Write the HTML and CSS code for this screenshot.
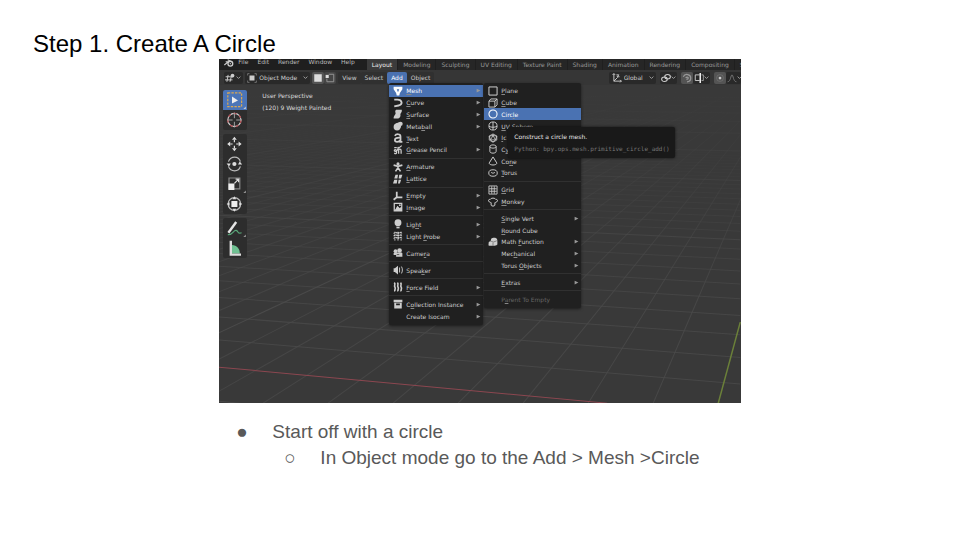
FILE: index.html
```html
<!DOCTYPE html>
<html lang="en">
<head>
<meta charset="utf-8">
<title>Step 1. Create A Circle</title>
<link rel="stylesheet" href="styles.css">
</head>
<body>
<svg class="symbols" aria-hidden="true">
  <symbol id="arrow" viewBox="0 0 8 8"><path d="M1 1l6 3-6 3z" fill="currentColor"/></symbol>
  <symbol id="chev" viewBox="0 0 8 8"><path d="M1 2.5l3 3 3-3" fill="none" stroke="currentColor" stroke-width="1.4"/></symbol>
  <symbol id="mesh" viewBox="0 0 16 16"><path fill-rule="evenodd" d="M1 1h14v4l-4 6-1 4H6l-1-4-4-6zM6 5l2 5 2-5z" fill="currentColor"/></symbol>
  <symbol id="curve" viewBox="0 0 16 16"><path d="M2 2.500h5c8 0 9 8 2 9.500l-7 1.500" fill="none" stroke="currentColor" stroke-width="3"/></symbol>
  <symbol id="surface" viewBox="0 0 16 16"><path d="M5 1h9c1 5-3 5-2 9 0 3-2 5-4 5H1c0-5 4-6 3-9-1-3 0-4 1-5z" fill="currentColor"/></symbol>
  <symbol id="meta" viewBox="0 0 16 16"><circle cx="6.500" cy="9.500" r="5.500" fill="currentColor"/><circle cx="12" cy="4.500" r="3.500" fill="currentColor"/><path d="M4 4l6-2 3 7-3 4z" fill="currentColor"/></symbol>
  <symbol id="font" viewBox="0 0 16 16"><path d="M3 4.500c2-3.500 9-3.500 9 1V14h3M12 7.500C6 7 3 8.500 3 11c0 4 7 4 9 0" fill="none" stroke="currentColor" stroke-width="2.800"/></symbol>
  <symbol id="grease" viewBox="0 0 16 16"><path d="M2 13c5 3 4-3 3-5-2-2-4 1-2 2 3 1 6-3 5-7M9 14V9c0-3 4-3 4 0v5M2 4h4M9 5l5-4" fill="none" stroke="currentColor" stroke-width="2"/></symbol>
  <symbol id="armature" viewBox="0 0 16 16"><circle cx="8" cy="3" r="2.500" fill="currentColor"/><path d="M1 5l7 2 7-2M8 6v4M8 9l-4 6M8 9l4 6" fill="none" stroke="currentColor" stroke-width="2.600"/></symbol>
  <symbol id="lattice" viewBox="0 0 16 16"><path d="M4 1h4L7 7H2zM10 1h5l-2 6H9zM2 9h5l-1 6H0zM9 9h4l-2 6H8z" fill="currentColor"/></symbol>
  <symbol id="empty" viewBox="0 0 16 16"><path d="M6 1v9M6 10h9M6 10l-5 4" fill="none" stroke="currentColor" stroke-width="2.800"/></symbol>
  <symbol id="image" viewBox="0 0 16 16"><path fill-rule="evenodd" d="M1 1h14v14H1zM3 3v10l4-6 3 3 3-2V3z" fill="currentColor"/><path d="M3 14l4-8 3 3 3 5z" fill="currentColor"/><circle cx="11" cy="5" r="1.500" fill="currentColor"/></symbol>
  <symbol id="light" viewBox="0 0 16 16"><circle cx="8" cy="6" r="5.500" fill="currentColor"/><path d="M5.500 11h5v4h-5z" fill="currentColor"/><path d="M5 12h6" stroke="#202020"/></symbol>
  <symbol id="probe" viewBox="0 0 16 16"><path d="M1 4l3-2 4 2 3-2 4 2M1 8l3-2 4 2 3-2 4 2M1 12l3-2 4 2 3-2 4 2M3 1v14M8 1v14M13 1v14" fill="none" stroke="currentColor" stroke-width="1.800" stroke-dasharray="3 1"/></symbol>
  <symbol id="camera" viewBox="0 0 16 16"><circle cx="4" cy="5" r="3" fill="currentColor"/><circle cx="10.500" cy="4" r="3.700" fill="currentColor"/><path d="M4 7h10v7H5V11H1V8zM12 9l3-1v6l-3-2z" fill="currentColor"/><path d="M6 10.500h4" stroke="#202020"/></symbol>
  <symbol id="speaker" viewBox="0 0 16 16"><path d="M1 5h2l5-4v14l-5-4H1z" fill="currentColor"/><path d="M10.500 4v8M13.500 2.500c2 3 2 8 0 11" fill="none" stroke="currentColor" stroke-width="1.500"/></symbol>
  <symbol id="force" viewBox="0 0 16 16"><path d="M2 1c3 3-1 4 1 7s-1 4 0 7M7 1c3 3-1 4 1 7s-1 4 0 7M12 1c3 3-1 4 1 7s-1 4 0 7" fill="none" stroke="currentColor" stroke-width="2.600"/></symbol>
  <symbol id="collection" viewBox="0 0 16 16"><path fill-rule="evenodd" d="M1 1h14v4H1zM2 6h12v9H2zM5 7v3h6V7z" fill="currentColor"/></symbol>
  <symbol id="plane" viewBox="0 0 16 16"><path d="M1.500 1.500h13v13h-13z" fill="none" stroke="currentColor" stroke-width="1.600"/></symbol>
  <symbol id="cube" viewBox="0 0 16 16"><path d="M1.500 5h9.500v9.500H1.500zM1.500 5l3-3.500h10V11L11 14.500M11 5l3.500-3.500" fill="none" stroke="currentColor" stroke-width="1.500"/></symbol>
  <symbol id="circle" viewBox="0 0 16 16"><circle cx="8" cy="8" r="6.500" fill="none" stroke="currentColor" stroke-width="1.700"/></symbol>
  <symbol id="uv" viewBox="0 0 16 16"><circle cx="8" cy="8" r="6.500" fill="none" stroke="currentColor" stroke-width="1.500"/><path d="M8 1.500v13M1.500 8.500c4 2 9 2 13 0" fill="none" stroke="currentColor" stroke-width="1.500"/></symbol>
  <symbol id="ico" viewBox="0 0 16 16"><path d="M8 1.500l6 3.300v6.500l-6 3.300-6-3.300V4.800zM8 4l4 7H4zM8 1.500V4M2 5l6-1 6 1M4 11l-2-6M12 11l2-6M4 11l4 3.500 4-3.500" fill="none" stroke="currentColor" stroke-width="1.300"/></symbol>
  <symbol id="cyl" viewBox="0 0 16 16"><path d="M3 4v8c0 3.500 10 3.500 10 0V4C13 .6 3 .6 3 4zm0 0c0 3.500 10 3.500 10 0" fill="none" stroke="currentColor" stroke-width="1.500"/></symbol>
  <symbol id="cone" viewBox="0 0 16 16"><path d="M8 1.500L2 11c-1 4.500 13 4.500 12 0z" fill="none" stroke="currentColor" stroke-width="1.600"/></symbol>
  <symbol id="torus" viewBox="0 0 16 16"><ellipse cx="8" cy="8" rx="6.800" ry="5.200" fill="none" stroke="currentColor" stroke-width="1.500"/><path d="M5 7c2 1.700 4 1.700 6 0" fill="none" stroke="currentColor" stroke-width="1.500"/></symbol>
  <symbol id="grid" viewBox="0 0 16 16"><path d="M1.500 1.500h13v13h-13zM6 2v12M10 2v12M2 6h12M2 10h12" fill="none" stroke="currentColor" stroke-width="1.400"/></symbol>
  <symbol id="monkey" viewBox="0 0 16 16"><path d="M5 9C3 9 4 8 3 8 0 8 0 3 3.500 4 4 1 12 1 12.500 4 16 3 16 8 13 8c-1 0 0 1-2 1v4c0 2-6 2-6 0z" fill="none" stroke="currentColor" stroke-width="1.600"/></symbol>
  <symbol id="math" viewBox="0 0 16 16"><path d="M1 10c0-3 1-3 3-3l1-4c2-2 6-2 8-1 2 1 2 3 2 6v4c-2 2-4 2-6 2H2c-2 0-1-2-1-4z" fill="currentColor"/><path d="M5 7l4 1 5-2M8 9v5" fill="none" stroke="#555"/></symbol>
</svg>

<main class="slide">
  <h1 class="title">Step 1. Create A Circle</h1>

  <section class="app" aria-label="3D viewport">
    <svg class="floor" viewBox="0 0 521 344" preserveAspectRatio="none" aria-hidden="true">
      <defs>
        <linearGradient id="fade" gradientUnits="userSpaceOnUse" x1="0" y1="30" x2="0" y2="250">
          <stop offset="0" stop-color="#4a4a4a" stop-opacity="0"/>
          <stop offset="1" stop-color="#4a4a4a"/>
        </linearGradient>
      </defs>
      <g id="lines" stroke="url(#fade)"></g>
      <path d="M0 308L388 344" stroke="#8c4750"/>
      <path d="M521 263L499 344" stroke="#6b8039" stroke-width="1.500"/>
    </svg>

    <header class="topbar">
      <svg class="logo" viewBox="0 0 16 12" aria-hidden="true"><circle cx="10" cy="7" r="3.600" fill="none" stroke="#ccc" stroke-width="2"/><circle cx="10" cy="7" r="1" fill="#ccc"/><path d="M1 9l6-5H3M6 1l6 3" fill="none" stroke="#ccc" stroke-width="1.600"/></svg>
      <nav class="menus"><button>File</button><button>Edit</button><button>Render</button><button>Window</button><button>Help</button></nav>
      <nav class="tabs"><button class="on">Layout</button><button>Modeling</button><button>Sculpting</button><button>UV Editing</button><button>Texture Paint</button><button>Shading</button><button>Animation</button><button>Rendering</button><button>Compositing</button><button>S</button></nav>
    </header>

    <div class="header">
      <button class="chip editor" aria-label="Editor type"><svg class="icon" viewBox="0 0 16 16"><path d="M1 6h12M0 11h12M5 3L3 14M10 6L8 14" fill="none" stroke="currentColor" stroke-width="1.500"/><circle cx="12" cy="4" r="3" fill="currentColor"/></svg><svg class="chev"><use href="#chev"/></svg></button>
      <label class="chip mode"><svg class="icon" viewBox="0 0 16 16"><path d="M4 4h8v8H4z" fill="currentColor"/><path d="M1 4V1h3M12 1h3v3M15 12v3h-3M4 15H1v-3" fill="none" stroke="#999"/></svg><select aria-label="Mode"><option>Object Mode</option></select><svg class="chev"><use href="#chev"/></svg></label>
      <div class="toggles">
        <button class="lit" aria-label="Set selection"><svg class="icon" viewBox="0 0 16 16"><path d="M2 2h12v12H2z" fill="#ddd"/></svg></button><button class="lit half" aria-label="Extend selection"><svg class="icon" viewBox="0 0 16 16"><path d="M6 2h8v12H3V9" fill="none" stroke="#999" stroke-width="1.500"/><path d="M1 3h5v5H1z" fill="#ddd"/></svg></button>
      </div>
      <nav class="commands"><button>View</button><button>Select</button><button class="on">Add</button><button>Object</button></nav>
      <div class="options">
        <label class="chip orient"><svg class="icon" viewBox="0 0 16 16"><path d="M3 1v12h12M3 13l6-6M1 3l2-2 2 2M13 11l2 2-2 2M7 3h4L8 6h4" fill="none" stroke="currentColor" stroke-width="1.500"/></svg><select aria-label="Orientation"><option>Global</option></select><svg class="chev"><use href="#chev"/></svg></label>
        <button class="chip" aria-label="Pivot point"><svg class="icon" viewBox="0 0 16 16"><ellipse cx="5.500" cy="10" rx="4.500" ry="3.500" fill="none" stroke="currentColor" stroke-width="1.700"/><ellipse cx="10.500" cy="6" rx="4.500" ry="3.500" fill="none" stroke="currentColor" stroke-width="1.700"/><circle cx="8" cy="8" r="1.500" fill="currentColor"/></svg><svg class="chev"><use href="#chev"/></svg></button>
        <div class="toggles">
          <button class="lit" aria-label="Snap"><svg class="icon" viewBox="0 0 16 16"><path d="M2 6c3-6 12-4 12 2 0 4-3 6-6 6M6 8c1-2 4-2 4 0 0 1-1 2-3 2" fill="none" stroke="#999" stroke-width="2"/></svg></button><button class="chip" aria-label="Snap to"><svg class="icon" viewBox="0 0 16 16"><path d="M9 3H2v9h7" fill="none" stroke="currentColor" stroke-width="1.500"/><path d="M10 0v16" stroke="#eee" stroke-width="2.500"/><path d="M12 3h3v9h-3" fill="none" stroke="currentColor"/></svg><svg class="chev"><use href="#chev"/></svg></button>
        </div>
        <div class="toggles">
          <button class="lit" aria-label="Proportional editing"><svg class="icon" viewBox="0 0 16 16"><circle cx="8" cy="8" r="5.500" fill="none" stroke="#777"/><circle cx="8" cy="8" r="2.200" fill="#ccc"/></svg></button><button class="chip dim" aria-label="Falloff"><svg class="icon" viewBox="0 0 16 16"><path d="M1 14c5 0 5-11 7-11s2 11 7 11" fill="none" stroke="currentColor" stroke-width="1.500"/></svg><svg class="chev"><use href="#chev"/></svg></button>
        </div>
      </div>
    </div>

    <div class="stage">
      <div class="tools">
        <div class="group">
          <button class="on" aria-label="Select box"><svg viewBox="0 0 40 32"><path d="M8 4h23v23H8z" fill="none" stroke="#dba850" stroke-width="2" stroke-dasharray="4 2"/><path d="M15 10l10 7-10 5z" fill="#eee"/><path d="M38 27v4h-4z" fill="#ccc"/></svg></button>
          <button aria-label="Cursor"><svg viewBox="0 0 40 32"><circle cx="19" cy="16" r="11" fill="none" stroke="#ccc" stroke-width="2"/><circle cx="19" cy="16" r="11" fill="none" stroke="#b0484d" stroke-width="2" stroke-dasharray="5 5"/><path d="M19 4v9M19 19v9M7 16h9M22 16h9" stroke="#aaa" stroke-width="1.500"/></svg></button>
        </div>
        <div class="group">
          <button aria-label="Move"><svg viewBox="0 0 40 32"><path d="M19 9v4M19 19v4M12 16h4M22 16h4" stroke="#ddd" stroke-width="2"/><path d="M19 4l4 5h-8zM19 28l4-5h-8zM7 16l5-4v8zM31 16l-5-4v8z" fill="#ddd"/></svg></button>
          <button aria-label="Rotate"><svg viewBox="0 0 40 32"><path d="M9 12c4-10 17-10 20 0M9 20c4 10 17 10 20 0" fill="none" stroke="#bbb" stroke-width="2"/><circle cx="19" cy="16" r="3.500" fill="#ddd"/><path d="M6 15h7l-3 5zM32 17h-7l3-5z" fill="#ddd"/></svg></button>
          <button aria-label="Scale"><svg viewBox="0 0 40 32"><path d="M10 6h18v18H10z" fill="none" stroke="#888" stroke-width="2"/><path d="M9 15h10v11H9z" fill="#eee"/><path d="M19 15l7-7M21 8h5v5" fill="none" stroke="#ddd" stroke-width="2"/><path d="M38 27v4h-4z" fill="#999"/></svg></button>
          <button aria-label="Transform"><svg viewBox="0 0 40 32"><circle cx="19" cy="16" r="10.500" fill="none" stroke="#bbb" stroke-width="2"/><path d="M14 11h10v10H14z" fill="#eee"/><path d="M19 3l3 5h-6zM19 29l3-5h-6zM6 16l5-3v6zM32 16l-5-3v6z" fill="#ddd"/></svg></button>
        </div>
        <div class="group">
          <button aria-label="Annotate"><svg viewBox="0 0 40 32"><path d="M9 24L22 6" stroke="#e6e6e6" stroke-width="4"/><path d="M8 27c9 1 9-8 14-7 4 1 2 7 9 4" fill="none" stroke="#58a578" stroke-width="2"/><path d="M38 27v4h-4z" fill="#999"/></svg></button>
          <button aria-label="Measure"><svg viewBox="0 0 40 32"><path d="M15 11c8 0 13 6 13 14H15z" fill="#6fc092"/><path d="M13 4v23h17" fill="none" stroke="#ddd" stroke-width="4"/></svg></button>
        </div>
      </div>
      <p class="info">User Perspective<br>(120) 9 Weight Painted</p>
    </div>

    <div class="menu add" role="menu" aria-label="Add">
      <button class="item on"><svg class="icon"><use href="#mesh"/></svg><span><u>M</u>esh</span><svg class="arrow"><use href="#arrow"/></svg></button>
      <button class="item"><svg class="icon"><use href="#curve"/></svg><span><u>C</u>urve</span><svg class="arrow"><use href="#arrow"/></svg></button>
      <button class="item"><svg class="icon"><use href="#surface"/></svg><span><u>S</u>urface</span><svg class="arrow"><use href="#arrow"/></svg></button>
      <button class="item"><svg class="icon"><use href="#meta"/></svg><span>Meta<u>b</u>all</span><svg class="arrow"><use href="#arrow"/></svg></button>
      <button class="item"><svg class="icon"><use href="#font"/></svg><span><u>T</u>ext</span></button>
      <button class="item"><svg class="icon"><use href="#grease"/></svg><span><u>G</u>rease Pencil</span><svg class="arrow"><use href="#arrow"/></svg></button>
      <hr>
      <button class="item"><svg class="icon"><use href="#armature"/></svg><span><u>A</u>rmature</span></button>
      <button class="item"><svg class="icon"><use href="#lattice"/></svg><span><u>L</u>attice</span></button>
      <hr>
      <button class="item"><svg class="icon"><use href="#empty"/></svg><span><u>E</u>mpty</span><svg class="arrow"><use href="#arrow"/></svg></button>
      <button class="item"><svg class="icon"><use href="#image"/></svg><span><u>I</u>mage</span><svg class="arrow"><use href="#arrow"/></svg></button>
      <hr>
      <button class="item"><svg class="icon"><use href="#light"/></svg><span>Lig<u>h</u>t</span><svg class="arrow"><use href="#arrow"/></svg></button>
      <button class="item"><svg class="icon"><use href="#probe"/></svg><span>Light <u>P</u>robe</span><svg class="arrow"><use href="#arrow"/></svg></button>
      <hr>
      <button class="item"><svg class="icon"><use href="#camera"/></svg><span>Came<u>r</u>a</span></button>
      <hr>
      <button class="item"><svg class="icon"><use href="#speaker"/></svg><span>Spea<u>k</u>er</span></button>
      <hr>
      <button class="item"><svg class="icon"><use href="#force"/></svg><span><u>F</u>orce Field</span><svg class="arrow"><use href="#arrow"/></svg></button>
      <hr>
      <button class="item"><svg class="icon"><use href="#collection"/></svg><span>C<u>o</u>llection Instance</span><svg class="arrow"><use href="#arrow"/></svg></button>
      <button class="item"><i class="icon"></i><span>Create Isocam</span><svg class="arrow"><use href="#arrow"/></svg></button>
    </div>

    <div class="menu sub" role="menu" aria-label="Mesh">
      <button class="item"><svg class="icon"><use href="#plane"/></svg><span><u>P</u>lane</span></button>
      <button class="item"><svg class="icon"><use href="#cube"/></svg><span><u>C</u>ube</span></button>
      <button class="item on"><svg class="icon"><use href="#circle"/></svg><span>Circ<u>l</u>e</span></button>
      <button class="item"><svg class="icon"><use href="#uv"/></svg><span><u>U</u>V Sphere</span></button>
      <button class="item"><svg class="icon"><use href="#ico"/></svg><span><u>I</u>c</span></button>
      <button class="item"><svg class="icon"><use href="#cyl"/></svg><span>C<u>y</u></span></button>
      <button class="item"><svg class="icon"><use href="#cone"/></svg><span>Co<u>n</u>e</span></button>
      <button class="item"><svg class="icon"><use href="#torus"/></svg><span><u>T</u>orus</span></button>
      <hr>
      <button class="item"><svg class="icon"><use href="#grid"/></svg><span><u>G</u>rid</span></button>
      <button class="item"><svg class="icon"><use href="#monkey"/></svg><span><u>M</u>onkey</span></button>
      <hr>
      <button class="item"><i class="icon"></i><span><u>S</u>ingle Vert</span><svg class="arrow"><use href="#arrow"/></svg></button>
      <button class="item"><i class="icon"></i><span><u>R</u>ound Cube</span></button>
      <button class="item"><svg class="icon"><use href="#math"/></svg><span>Math <u>F</u>unction</span><svg class="arrow"><use href="#arrow"/></svg></button>
      <button class="item"><i class="icon"></i><span>Mec<u>h</u>anical</span><svg class="arrow"><use href="#arrow"/></svg></button>
      <button class="item"><i class="icon"></i><span>Torus <u>O</u>bjects</span><svg class="arrow"><use href="#arrow"/></svg></button>
      <hr>
      <button class="item"><i class="icon"></i><span><u>E</u>xtras</span><svg class="arrow"><use href="#arrow"/></svg></button>
      <hr>
      <button class="item" disabled><i class="icon"></i><span>P<u>a</u>rent To Empty</span></button>
    </div>

    <div class="tooltip" role="tooltip"><span>Construct a circle mesh.</span><code>Python: bpy.ops.mesh.primitive_circle_add()</code></div>
  </section>

  <ul class="notes">
    <li><span class="mark">●</span>Start off with a circle</li>
    <li class="nested"><span class="mark">○</span>In Object mode go to the Add &gt; Mesh &gt;Circle</li>
  </ul>
</main>
<script src="floor.js"></script>
</body>
</html>
```
FILE: floor.js
```js
// Draws the perspective floor grid: two families of lines, each meeting at a vanishing point.
const group = document.getElementById("lines");
const horizon = 3;
function line(x1, y1, x2, y2, opacity) {
  const el = document.createElementNS("http://www.w3.org/2000/svg", "line");
  Object.entries({ x1, y1, x2, y2, opacity }).forEach(([k, v]) => el.setAttribute(k, v));
  group.append(el);
}
for (let n = -1; n <= 90; n++) {
  const major = n % 10 === 0;
  if (n === 0 || (n > 30 && !major)) continue;
  const y = horizon + 1 / (0.003275 + 0.000325 * n);
  line(0, y, 521, y + 521 * 0.000305 * (y - horizon), major ? 1 : Math.max(0.2, 0.85 - n * 0.018));
}
for (let n = 1; n <= 90; n++) {
  const major = n % 10 === 0;
  if (n > 45 && !major) continue;
  line(499 - 65 * n, 344, 580, horizon, major ? 1 : Math.max(0.2, 0.85 - n * 0.012));
}
```
FILE: styles.css
```css
* { box-sizing: border-box; }
body { margin: 0; background: #fff; font-family: "Liberation Sans", Arial, sans-serif; }
button, select { margin: 0; padding: 0; border: 0; background: none; color: inherit; font: inherit; text-align: left; white-space: nowrap; appearance: none; }
.symbols { position: absolute; width: 0; height: 0; }
.slide { padding-top: 30px; }
.title { margin: 0 0 1px 33px; font-size: 24px; font-weight: 400; line-height: 28px; color: #000; }

.app { position: relative; display: flex; flex-direction: column; width: 54.3%; margin-left: 22.85%; aspect-ratio: 521 / 344; overflow: hidden; background: #393939; color: #cdcdcd; font: 6px/12px "DejaVu Sans", sans-serif; }
.floor { position: absolute; inset: 0; width: 100%; height: 100%; }
.icon { flex: none; width: 10px; height: 10px; }
.chev { flex: none; width: 5px; height: 5px; color: #aaa; }

.topbar { position: relative; display: flex; height: 11px; background: #1f1f1f; overflow: hidden; }
.logo { flex: none; width: 14px; height: 8px; margin: 0 2px 0 3px; }
.menus { display: flex; gap: 9px; height: 6px; line-height: 6px; color: #bbb; }
.tabs { display: flex; gap: 1px; margin-left: 12px; color: #999; }
.tabs button { height: 11px; padding: 0 5px; line-height: 11px; background: #262626; }
.tabs .on { background: #3b3b3b; color: #eee; }

.header { position: relative; display: flex; align-items: center; height: 15px; background: #363636; }
.chip { display: flex; align-items: center; height: 12px; padding: 0 1px; border-radius: 2px; background: #292929; }
.editor { width: 19px; margin-left: 5px; gap: 1px; }
.mode { width: 65px; margin-left: 2px; gap: 2px; padding: 0 2px; }
.mode select, .orient select { flex: 1; min-width: 0; height: 12px; line-height: 12px; }
.toggles { display: flex; align-items: center; margin-left: 2px; }
.lit { display: flex; align-items: center; height: 12px; padding: 0 1px; background: #545454; border-radius: 2px; }
.half { background: #454545; }
.commands { display: flex; margin-left: 2px; }
.commands button { padding: 0 4px; height: 12px; border-radius: 2px; background: #303030; }
.commands .on { background: #4a71b0; color: #fff; }
.options { display: flex; align-items: center; gap: 4px; margin-left: auto; }
.options .toggles { margin: 0; }
.orient { width: 47px; gap: 2px; padding: 0 2px 0 3px; }
.dim { width: 15px; overflow: hidden; color: #777; }

.stage { position: relative; display: flex; gap: 15px; padding: 5px 4px; }
.tools { display: flex; flex-direction: column; gap: 4px; width: 24px; }
.group { display: flex; flex-direction: column; border-radius: 2px; background: #2d2d2d; overflow: hidden; }
.group button { height: 20px; }
.group svg { display: block; width: 24px; height: 20px; }
.group .on { background: #4b75b8; }
.info { margin: 0; color: #dcdcdc; }

.menu { position: absolute; display: flex; flex-direction: column; padding: 2px 0 3px; background: #202020; box-shadow: 0 1px 3px #0008; border-radius: 2px; }
.add { left: 170px; top: 24px; width: 94px; height: 242px; }
.sub { left: 265px; top: 24px; width: 97px; height: 225px; }
.item { display: flex; flex: 9 1 0; align-items: center; min-height: 0; padding: 0 2px 0 4px; gap: 3px; line-height: 11px; }
.item span { flex: 1; }
.item.on { background: #4a72b2; color: #fff; }
.item:disabled { color: #666; }
.item .icon { width: 10px; height: 10px; }
.arrow { width: 5px; height: 5px; color: #999; }
.menu u { text-underline-offset: 1px; text-decoration-thickness: 1px; text-decoration-color: #888; }
hr { flex: 4 1 0; width: 100%; margin: 0; border: 0; background: linear-gradient(#303030, #303030) center / 100% 1px no-repeat; }
.tooltip { position: absolute; left: 289px; top: 68px; display: flex; flex-direction: column; padding: 4px 5px 3px 6px; width: 167px; background: #191919; border-radius: 2px; box-shadow: 0 0 3px #000a; color: #e8e8e8; white-space: nowrap; }
.tooltip code { font: 6px/12px "DejaVu Sans Mono", monospace; color: #777; }

.notes { margin: 16px 0 0 22.85%; padding: 0; list-style: none; font-size: 19px; line-height: 26px; color: #595959; }
.notes li { display: flex; padding-left: 17px; }
.notes .nested { padding-left: 65px; }
.mark { flex: none; width: 36px; }
```
